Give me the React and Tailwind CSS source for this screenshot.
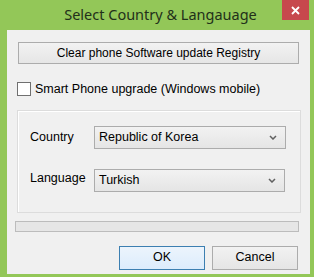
// Windows 8 style dialog: "Select Country & Langauage"

const ui = { fontFamily: '"Liberation Sans", Arial, sans-serif' };

function Chevron() {
  return (
    <svg width="8" height="5" viewBox="0 0 8 5" className="block">
      <path d="M1 1 L4 4 L7 1" fill="none" stroke="#606060" strokeWidth="1.5" />
    </svg>
  );
}

function Select({ value, width }) {
  return (
    <div
      className={`h-[23px] ${width} flex items-center justify-between pl-[4px] pr-[8px] border border-[#acacac] bg-gradient-to-b from-[#f2f2f2] to-[#e5e5e5] text-[12.5px] text-black`}
    >
      <span>{value}</span>
      <Chevron />
    </div>
  );
}

export default function App() {
  return (
    <div className="w-[314px] h-[277px] bg-[#93c758] flex flex-col pl-[7px] pr-[4px] pb-[3px]" style={ui}>

      {/* Title bar */}
      <div className="h-[30px] relative flex items-center justify-center">
        <span className="text-[14.5px] text-[#22301a] pb-[1px] pl-[4px]" style={{ fontFamily: '"Noto Sans", "Open Sans", sans-serif' }}>
          Select Country &amp; Langauage
        </span>
        <div className="absolute top-0 right-[1px] w-[27px] h-[20px] bg-[#c7484d] flex items-center justify-center">
          <svg width="9" height="9" viewBox="0 0 9 9">
            <path d="M1 1 L8 8 M8 1 L1 8" stroke="#fff" strokeWidth="1.8" />
          </svg>
        </div>
      </div>

      {/* Client area */}
      <div className="flex-1 bg-[#f0f0f0] flex flex-col pt-[12px] pl-[10px] pr-[11px]">

        <div className="ml-[1px] h-[22px] border border-[#acacac] bg-gradient-to-b from-[#f2f2f2] to-[#e6e6e6] flex items-center justify-center text-[12px] text-black">
          Clear phone Software update Registry
        </div>

        <label className="mt-[16px] flex items-center gap-[4px] text-[12.5px] text-black">
          <span className="w-[14px] h-[14px] border border-[#707070] bg-white" />
          Smart Phone upgrade (Windows mobile)
        </label>

        {/* Group box */}
        <div className="mt-[11px] h-[103px] mr-[-2px] border border-[#dcdcdc] shadow-[inset_1px_1px_0_#ffffff] flex flex-col pl-[12px] pt-[15px]">
          <div className="flex items-center">
            <span className="w-[64px] text-[12.5px] text-black">Country</span>
            <Select value="Republic of Korea" width="w-[192px]" />
          </div>
          <div className="flex items-center mt-[20px]">
            <span className="w-[64px] text-[12.5px] text-black pb-[5px]">Language</span>
            <Select value="Turkish" width="w-[191px]" />
          </div>
        </div>

        {/* Progress bar */}
        <div className="mt-[8px] ml-[-2px] h-[11px] border border-[#bcbcbc] bg-[#e6e6e6]" />

        {/* Buttons */}
        <div className="mt-[14px] flex justify-end gap-[7px] pr-[1px]">
          <div className="w-[86px] h-[24px] border border-[#3c7fb1] bg-gradient-to-b from-[#ecf4fc] to-[#dcecfc] flex items-center justify-center text-[12.5px] text-black">
            OK
          </div>
          <div className="w-[86px] h-[24px] border border-[#acacac] bg-gradient-to-b from-[#f2f2f2] to-[#e5e5e5] flex items-center justify-center text-[12.5px] text-black">
            Cancel
          </div>
        </div>
      </div>
    </div>
  );
}
